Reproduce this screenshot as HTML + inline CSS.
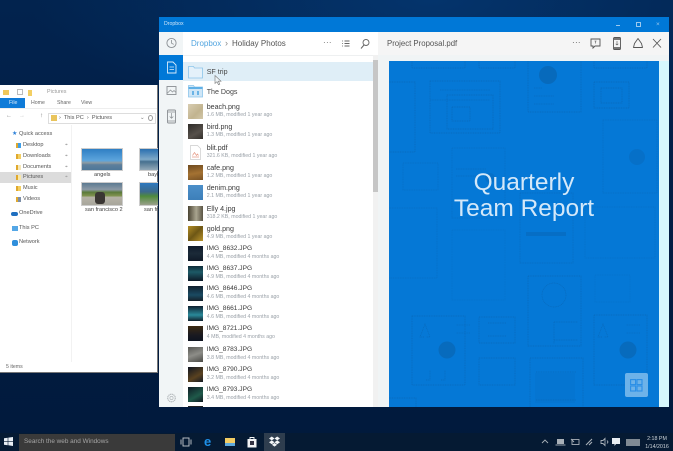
<!DOCTYPE html>
<html><head><meta charset="utf-8"><style>
*{box-sizing:border-box}
html,body{margin:0;padding:0}
body{width:673px;height:451px;overflow:hidden;position:relative;font-family:"Liberation Sans",sans-serif;background:#02183a}
#w{position:absolute;left:0;top:0;width:673px;height:451px;overflow:hidden;filter:blur(.35px)}
.a{position:absolute}
.t{position:absolute;white-space:nowrap;line-height:1}
#bg{left:0;top:0;width:673px;height:451px;background:radial-gradient(ellipse 400px 130px at 430px 0px,#04346c 0%,rgba(4,45,96,0) 100%),linear-gradient(180deg,#02234e,#021c42 60%,#011a3c)}
.row{position:absolute;left:183px;width:190px;height:20px}
.th{position:absolute;left:5px;top:2px;width:15px;height:15px}
.n{position:absolute;left:23.7px;top:2px;font-size:7.1px;color:#3a3a3a;white-space:nowrap;line-height:1}
.i{font-size:6.6px;top:2.2px}
.s{position:absolute;left:23.7px;top:11.2px;font-size:5.25px;color:#9aa1a8;white-space:nowrap;line-height:1}
.nav{position:absolute;font-size:5.6px;color:#555;white-space:nowrap;line-height:1}
.fi{position:absolute;width:5px;height:5px;background:#f3cf63;border-left:2px solid #e0a92e}
.pin{position:absolute;left:65px;font-size:5px;color:#aaa;line-height:1}
</style></head><body><div id="w">
<div class="a" id="bg"></div>

<!-- Explorer -->
<div class="a" style="left:0;top:85px;width:158px;height:288px;background:#fff;border-right:1px solid #777;border-bottom:1px solid #777"></div>
<div class="a" style="left:3px;top:90px;width:6px;height:5px;background:#f0c75a"></div>
<div class="a" style="left:17px;top:89px;width:6px;height:6px;border:1px solid #bbb;background:#fff"></div>
<div class="a" style="left:28px;top:89.5px;width:4px;height:6px;background:#f3cf63"></div>
<div class="t" style="left:47px;top:89.5px;font-size:5.4px;color:#999">Pictures</div>
<div class="a" style="left:0;top:98px;width:25px;height:10px;background:#0f7bd8"></div>
<div class="t" style="left:9px;top:100.5px;font-size:5.2px;color:#dcecf9">File</div>
<div class="t" style="left:31px;top:101px;font-size:5.2px;color:#666">Home</div>
<div class="t" style="left:57px;top:101px;font-size:5.2px;color:#666">Share</div>
<div class="t" style="left:81px;top:101px;font-size:5.2px;color:#666">View</div>
<div class="a" style="left:0;top:108px;width:157px;height:1px;background:#eee"></div>
<div class="t" style="left:6px;top:113px;font-size:6px;color:#888">←</div>
<div class="t" style="left:19px;top:113px;font-size:6px;color:#ccc">→</div>
<div class="t" style="left:40px;top:113px;font-size:6.5px;color:#777">↑</div>
<div class="a" style="left:48px;top:113px;width:108px;height:11px;border:1px solid #ddd"></div>
<div class="a" style="left:51px;top:115px;width:6px;height:6px;background:#e9c45c"></div>
<div class="t" style="left:59px;top:116px;font-size:5.6px;color:#555">›&nbsp; This PC &nbsp;›&nbsp; Pictures</div>
<div class="t" style="left:140px;top:115.5px;font-size:5.6px;color:#777">⌄</div>
<div class="a" style="left:148px;top:115px;width:5px;height:6px;border:1px solid #999;border-radius:50%"></div>

<div class="a" style="left:71px;top:125px;width:1px;height:237px;background:#f2f2f2"></div>
<div class="a" style="left:0;top:172px;width:71px;height:10.5px;background:#dcdcdc"></div>
<div class="t" style="left:12px;top:131px;font-size:6px;color:#2a7fd8">★</div>
<div class="nav" style="left:19px;top:131.5px">Quick access</div>
<div class="fi" style="left:16px;top:142.5px;background:#3f9fe8"></div><div class="nav" style="left:23px;top:142.5px">Desktop</div><div class="pin" style="top:142.5px">⌖</div>
<div class="fi" style="left:16px;top:153.5px"></div><div class="nav" style="left:23px;top:153.5px">Downloads</div><div class="pin" style="top:153.5px">⌖</div>
<div class="fi" style="left:16px;top:164.5px;background:#f5e7b8"></div><div class="nav" style="left:23px;top:164.5px">Documents</div><div class="pin" style="top:164.5px">⌖</div>
<div class="fi" style="left:16px;top:175px;background:#f7e6a8"></div><div class="nav" style="left:23px;top:175px">Pictures</div><div class="pin" style="top:175px">⌖</div>
<div class="fi" style="left:16px;top:185.5px"></div><div class="nav" style="left:23px;top:185.5px">Music</div>
<div class="fi" style="left:16px;top:196.5px;background:#7d8fa8"></div><div class="nav" style="left:23px;top:196.5px">Videos</div>
<div class="a" style="left:11px;top:212px;width:7px;height:4px;background:#1f6fc0;border-radius:2px"></div><div class="nav" style="left:19px;top:211px">OneDrive</div>
<div class="a" style="left:12px;top:226px;width:6px;height:5px;background:#54a7e6"></div><div class="nav" style="left:19px;top:225.5px">This PC</div>
<div class="a" style="left:12px;top:240px;width:6px;height:6px;background:#2f8fdc;border-radius:2px"></div><div class="nav" style="left:19px;top:240px">Network</div>
<div class="t" style="left:6px;top:365px;font-size:5.2px;color:#666">5 items</div>

<div class="a" style="left:81px;top:148px;width:42px;height:23px;background:linear-gradient(180deg,#2f7fc4 0%,#5da5dc 55%,#8e9aa0 66%,#5d7f9c 75%,#4d7799 100%);border:1px solid #ccc"></div>
<div class="t" style="left:94px;top:173px;font-size:5.6px;color:#444">angels</div>
<div class="a" style="left:139px;top:148px;width:19px;height:23px;background:linear-gradient(180deg,#2a6fb0,#7fa9c8 50%,#46708f 60%,#93a9b8);border:1px solid #ccc;border-right:0"></div>
<div class="t" style="left:148px;top:173px;font-size:5.6px;color:#444">bayl</div>
<div class="a" style="left:81px;top:182px;width:42px;height:24px;background:linear-gradient(180deg,#5c7a92 0%,#8c99a5 30%,#5b7a3a 42%,#80924f 58%,#b5b2a6 65%,#a8a69c 100%);border:1px solid #ccc"></div>
<div class="a" style="left:95px;top:192px;width:10px;height:12px;background:#3a3633;border-radius:3px"></div>
<div class="t" style="left:85px;top:208px;font-size:5.6px;color:#444">san francisco 2</div>
<div class="a" style="left:139px;top:182px;width:19px;height:24px;background:linear-gradient(180deg,#2d78bf,#3d6a8a 40%,#4e8a3c 60%,#9aa08a);border:1px solid #ccc;border-right:0"></div>
<div class="t" style="left:144px;top:208px;font-size:5.6px;color:#444">san fr</div>

<!-- Dropbox window -->
<div class="a" style="left:159px;top:17px;width:510px;height:390px;background:#fff"></div>
<div class="a" style="left:159px;top:17px;width:510px;height:15px;background:#0078d7"></div>
<div class="t" style="left:164px;top:22px;font-size:5.2px;color:#cfe6f8">Dropbox</div>
<div class="a" style="left:616px;top:24.5px;width:4px;height:1px;background:#9cc9ee"></div>
<div class="a" style="left:636px;top:22px;width:5px;height:5px;border:1px solid #9cc9ee"></div>
<div class="t" style="left:656px;top:21.5px;font-size:6.5px;color:#9cc9ee">×</div>

<div class="a" style="left:159px;top:32px;width:24px;height:375px;background:#f1f5f6"></div>
<div class="a" style="left:159px;top:55px;width:24px;height:25px;background:#0078d7"></div>
<div class="a" style="left:183px;top:55px;width:190px;height:1px;background:#eef0f1"></div>
<div class="a" style="left:378px;top:32px;width:291px;height:375px;background:#f0f4f5"></div>
<div class="a" style="left:378px;top:32px;width:291px;height:23px;background:#f5f5f5"></div>

<svg class="a" style="left:159px;top:32px" width="24" height="375" fill="none">
<circle cx="12.5" cy="11" r="4.6" stroke="#8a8f93" stroke-width=".9"/><path d="M12.5 8v3.2l2.2 1.2" stroke="#8a8f93" stroke-width=".8"/>
<path d="M8.5 30h5.500l3 3v8h-8.500z" stroke="#d8ecfb" stroke-width=".9"/><path d="M10.500 35h4.500M10.500 37.500h4.500" stroke="#d8ecfb" stroke-width=".7"/>
<rect x="8" y="54.500" width="9" height="8" stroke="#8a8f93" stroke-width=".9"/><path d="M8.500 61l3-3 2 2 1.500-1.500 2 2" stroke="#8a8f93" stroke-width=".7"/>
<rect x="8.500" y="78" width="8" height="13" rx="1" stroke="#8a8f93" stroke-width=".9"/><path d="M12.500 81v5M10.700 84.500l1.800 1.800 1.800-1.800M8.500 80h8M8.500 89h8" stroke="#8a8f93" stroke-width=".7"/>
<circle cx="12.500" cy="366" r="3.800" stroke="#b4b9bc" stroke-width="1.100" stroke-dasharray="1.300 .5"/><circle cx="12.500" cy="366" r="1.600" stroke="#b4b9bc" stroke-width=".7"/>
</svg>

<div class="t" style="left:191px;top:40px;font-size:8px;color:#52a5e0">Dropbox</div>
<div class="t" style="left:225px;top:39px;font-size:9px;color:#888">›</div>
<div class="t" style="left:232px;top:40px;font-size:8px;color:#555">Holiday Photos</div>
<div class="t" style="left:323px;top:39px;font-size:8px;color:#666;letter-spacing:.3px">···</div>
<svg class="a" style="left:340px;top:38px" width="32" height="13" fill="none" stroke="#666">
<path d="M4.500 3h5M4.500 5.500h5M4.500 8h5" stroke-width="1.100"/><path d="M2 3h1M2 5.500h1M2 8h1" stroke-width=".8"/>
<circle cx="26" cy="4.500" r="3" stroke-width=".9"/><path d="M24 7l-3 3.500" stroke-width="1"/>
</svg>

<div class="t" style="left:387px;top:40px;font-size:7.800px;color:#555">Project Proposal.pdf</div>
<div class="t" style="left:572px;top:39px;font-size:8px;color:#555;letter-spacing:.3px">···</div>
<svg class="a" style="left:588px;top:35px" width="78" height="17" fill="none" stroke="#555">
<path d="M3 4h9v7H7l-2 2v-2H3z" stroke-width=".9"/><path d="M7.500 6v2.500M6.500 6h2" stroke-width=".6"/>
<rect x="25.500" y="2.500" width="7" height="12" rx="1" stroke-width=".9"/><rect x="26" y="3" width="6" height="2" fill="#777" stroke="none"/><rect x="26" y="12" width="6" height="2" fill="#777" stroke="none"/><path d="M29 6v4M27.700 8.800L29 10l1.300-1.200" stroke-width=".6"/>
<path d="M50 3.500l3.500 5 1 4h-9l1-4z" stroke-width=".9" stroke-linejoin="round"/>
<path d="M65 4l8 8.500M73 4l-8 8.500" stroke-width=".9"/>
</svg>

<!-- list -->
<div class="a" style="left:183px;top:62px;width:190px;height:19px;background:#dfeef7"></div>
<svg class="a" style="left:188px;top:64px" width="15" height="34" fill="none">
<path d="M.5 2.500h5l1 1.500h8v10H.5z" fill="#e4f1fa" stroke="#8cc5ea" stroke-width=".8"/>
<path d="M.5 21.500h5l1 1.500h8v10H.5z" fill="#cfe6f7" stroke="#8cc5ea" stroke-width=".8"/>
<path d="M.5 24h14" stroke="#5fb0e6" stroke-width="2"/>
<path d="M5 27v4M10 27v4" stroke="#4aa3e0" stroke-width="1.500"/>
</svg>
<div class="t" style="left:206.700px;top:68.500px;font-size:7.100px;color:#444">SF trip</div>
<svg class="a" style="left:214px;top:75px" width="8" height="11"><path d="M1 .5v8l2-1.800 1.500 3 1.300-.6-1.400-2.900h2.600z" fill="#eef4f7" stroke="#777" stroke-width=".6"/></svg>
<div class="t" style="left:206.700px;top:88.500px;font-size:7.100px;color:#444">The Dogs</div>

<div class="row" style="top:102px"><div class="th" style="background:linear-gradient(135deg,#d8cdb2,#c2b48f 60%,#d2c7aa)"></div><div class="n">beach.png</div><div class="s">1.6 MB, modified 1 year ago</div></div>
<div class="row" style="top:122px"><div class="th" style="background:linear-gradient(150deg,#2d2b28,#56504a 60%,#33302c)"></div><div class="n">bird.png</div><div class="s">1.3 MB, modified 1 year ago</div></div>
<div class="row" style="top:142.500px"><svg class="th" viewBox="0 0 15 15" fill="none"><path d="M2.500.5h7l3 3v11h-10z" fill="#fff" stroke="#ccc" stroke-width=".7"/><path d="M4.500 10.500l2-3 2 3 1-1.500 1 1.500M4 12h7" stroke="#e59a86" stroke-width=".7"/></svg><div class="n">blit.pdf</div><div class="s">321.6 KB, modified 1 year ago</div></div>
<div class="row" style="top:163px"><div class="th" style="background:linear-gradient(170deg,#6e4a1f,#a47232 55%,#7a5325)"></div><div class="n">cafe.png</div><div class="s">1.2 MB, modified 1 year ago</div></div>
<div class="row" style="top:183px"><div class="th" style="background:linear-gradient(180deg,#4b8fc9,#3d7fb9)"></div><div class="n">denim.png</div><div class="s">2.1 MB, modified 1 year ago</div></div>
<div class="row" style="top:203.500px"><div class="th" style="background:linear-gradient(90deg,#4a4433,#a9a48f 55%,#5a5444)"></div><div class="n">Elly 4.jpg</div><div class="s">318.2 KB, modified 1 year ago</div></div>
<div class="row" style="top:224px"><div class="th" style="background:linear-gradient(135deg,#b38e26,#6e5715 50%,#b8932c)"></div><div class="n">gold.png</div><div class="s">4.9 MB, modified 1 year ago</div></div>
<div class="row" style="top:243.500px"><div class="th" style="background:linear-gradient(180deg,#0f1a2c,#1b2a38 50%,#101a28)"></div><div class="n i">IMG_8632.JPG</div><div class="s">4.4 MB, modified 4 months ago</div></div>
<div class="row" style="top:264px"><div class="th" style="background:linear-gradient(180deg,#0e2b38,#1d5a66 40%,#0e1a28)"></div><div class="n i">IMG_8637.JPG</div><div class="s">4.9 MB, modified 4 months ago</div></div>
<div class="row" style="top:284px"><div class="th" style="background:linear-gradient(180deg,#10202e,#1a4a62 60%,#16202a)"></div><div class="n i">IMG_8646.JPG</div><div class="s">4.6 MB, modified 4 months ago</div></div>
<div class="row" style="top:304px"><div class="th" style="background:linear-gradient(180deg,#0e2030,#2a8a9a 60%,#12222e)"></div><div class="n i">IMG_8661.JPG</div><div class="s">4.6 MB, modified 4 months ago</div></div>
<div class="row" style="top:324px"><div class="th" style="background:linear-gradient(180deg,#3b2a12,#1a1a20 60%,#0e1420)"></div><div class="n i">IMG_8721.JPG</div><div class="s">4 MB, modified 4 months ago</div></div>
<div class="row" style="top:344.500px"><div class="th" style="background:linear-gradient(160deg,#595955,#8d8d88 50%,#4a4a46)"></div><div class="n i">IMG_8783.JPG</div><div class="s">3.8 MB, modified 4 months ago</div></div>
<div class="row" style="top:364.500px"><div class="th" style="background:linear-gradient(150deg,#0e1420,#5a4220 60%,#141a24)"></div><div class="n i">IMG_8790.JPG</div><div class="s">3.2 MB, modified 4 months ago</div></div>
<div class="row" style="top:385px"><div class="th" style="background:linear-gradient(150deg,#0e1a24,#1f5a4a 60%,#101822)"></div><div class="n i">IMG_8793.JPG</div><div class="s">3.4 MB, modified 4 months ago</div></div>
<div class="a" style="left:188px;top:406px;width:15px;height:1px;background:#222"></div>

<!-- scrollbar -->
<div class="a" style="left:373px;top:55px;width:5px;height:352px;background:#f1f1f1"></div>
<div class="a" style="left:373px;top:60px;width:5px;height:132px;background:#c6c6c6"></div>

<!-- preview -->
<div class="a" style="left:659px;top:61px;width:10px;height:346px;background:#d6f7fd"></div>
<div class="a" style="left:389px;top:61px;width:270px;height:346px;background:#0578d6;overflow:hidden">
<svg width="270" height="346" viewBox="389 61 270 346" fill="none" stroke="#0a5fa8" stroke-width=".7" stroke-dasharray="1 .7" style="position:absolute;left:0;top:0;opacity:.62">
<rect x="412" y="40" width="53" height="28"/><rect x="479" y="40" width="36" height="28"/><rect x="528" y="40" width="53" height="72"/><rect x="594" y="40" width="53" height="28"/>
<rect x="594" y="82" width="35" height="26"/><rect x="601" y="88" width="21" height="15"/>
<rect x="430" y="81" width="70" height="52"/><rect x="447" y="95" width="46" height="34"/><rect x="452" y="107" width="18" height="14"/>
<rect x="375" y="82" width="40" height="70"/>
<rect x="452" y="148" width="53" height="70" opacity=".65"/><rect x="403" y="163" width="35" height="27" opacity=".65"/><rect x="603" y="120" width="54" height="73" opacity=".65"/>
<rect x="380" y="208" width="57" height="70" opacity=".65"/><rect x="520" y="193" width="53" height="70" opacity=".8"/><rect x="585" y="207" width="70" height="51" opacity=".5"/>
<rect x="452" y="230" width="53" height="70" opacity=".45"/>
<rect x="528" y="276" width="53" height="70"/><rect x="412" y="316" width="53" height="69"/><rect x="479" y="317" width="36" height="26"/><rect x="479" y="358" width="36" height="27"/><rect x="594" y="315" width="53" height="70"/><rect x="530" y="358" width="53" height="60"/><rect x="375" y="398" width="41" height="20"/><rect x="595" y="275" width="35" height="27" opacity=".4"/>
<circle cx="554" cy="295" r="12" opacity=".9"/><path d="M554 322v22M554 322h24M554 340h24" opacity=".9"/>
<path d="M456 169h30M456 176h30M430 100h60M452 100h36M440 90h50M534 88h8M534 96h20M534 104h20" opacity=".8"/>
<path d="M424 337h-4l5-13 5 13h-4M426 380h4v-10M441 380h4v-10M488 323h18M488 336h18M536 372h40M536 400h40M602 337h-4l5-13 5 13h-4" opacity=".9"/>
<path d="M470 325h-14M470 333h-14M640 325h-14M640 333h-14" opacity=".7"/>
<g stroke="none" fill="#0a5fa8"><circle cx="548" cy="75" r="9" opacity=".9"/><circle cx="447" cy="350" r="8.500" opacity=".85"/><circle cx="628" cy="350" r="8.500" opacity=".85"/><circle cx="637" cy="157" r="8" opacity=".5"/><circle cx="490" cy="178" r="5" opacity=".5"/><rect x="535" y="373" width="40" height="30" opacity=".2"/><rect x="526" y="232" width="40" height="4" opacity=".6"/></g>
</svg>
<div class="t" style="left:0;width:270px;text-align:center;top:109.500px;font-size:24.500px;color:#d4e8f9">Quarterly</div>
<div class="t" style="left:0;width:270px;text-align:center;top:135.500px;font-size:24.500px;color:#d4e8f9">Team Report</div>
<div class="a" style="left:236px;top:312px;width:23px;height:24px;background:#6db2e9;border-radius:2px"></div>
<svg class="a" style="left:241px;top:318px" width="13" height="13" fill="none" stroke="#2a8ee6" stroke-width="1.100"><rect x=".6" y=".6" width="5" height="5"/><rect x="7" y=".6" width="5" height="5"/><rect x=".6" y="7" width="5" height="5"/><rect x="7" y="7" width="5" height="5"/></svg>
</div>

<!-- Taskbar -->
<div class="a" style="left:0;top:433px;width:673px;height:18px;background:#051a33"></div>
<svg class="a" style="left:4px;top:437px" width="9" height="9" fill="#e8eef4"><path d="M0 1.300L3.700.7v3.400H0zM4.300.6L9 0v4.100H4.300zM0 4.700h3.700v3.600L0 7.700zM4.300 4.700H9V9l-4.700-.7z"/></svg>
<div class="a" style="left:19px;top:434px;width:156px;height:17px;background:#3a3a3a"></div>
<div class="t" style="left:24px;top:439px;font-size:6.400px;color:#a5a5a5">Search the web and Windows</div>
<svg class="a" style="left:180px;top:437px" width="12" height="10" fill="none" stroke="#c8ccd0" stroke-width=".9"><rect x="3" y="1" width="6" height="8"/><path d="M1 2.500v5M11 2.500v5"/></svg>
<div class="t" style="left:204px;top:434.500px;font-size:13px;color:#1e90e8;font-weight:bold">e</div>
<div class="a" style="left:225px;top:438px;width:10px;height:8px;background:#f2cc63;border-bottom:3px solid #5ea9dd"></div>
<svg class="a" style="left:247px;top:436px" width="10" height="12" fill="#f2f4f6"><path d="M.5 3h9v8.500h-9z"/><path d="M3 3V1.500h4V3" fill="none" stroke="#f2f4f6" stroke-width=".9"/><rect x="3" y="5" width="4" height="4" fill="#334"/></svg>
<div class="a" style="left:264px;top:433px;width:21px;height:18px;background:#2e3d4e"></div>
<svg class="a" style="left:269px;top:436px" width="11" height="11" fill="#f4f6f8"><path d="M2.800 .5L5.500 2.500 2.800 4.400 0 2.500zM8.200 .5L11 2.500 8.200 4.400 5.500 2.500zM2.800 4.400L5.500 6.300 2.800 8.200 0 6.300zM8.200 4.400L11 6.300 8.200 8.200 5.500 6.300zM2.900 8.800L5.500 7 8.100 8.800 5.500 10.600z"/></svg>

<svg class="a" style="left:540px;top:436px" width="85" height="12" fill="none" stroke="#a8b0b8" stroke-width=".9">
<path d="M2 7l3-3 3 3"/>
<rect x="17" y="3" width="7" height="5" fill="#a8b0b8" stroke="none"/><path d="M15.500 9h10"/>
<rect x="32" y="3.500" width="7" height="5"/><path d="M31 3l3 3"/>
<path d="M46 9l6-6M49 9l3-3" stroke-width="1.100"/>
<path d="M61 4.500h2l2-2v7l-2-2h-2zM67 4.500l1 1.500-1 1.500"/>
<path d="M72 2h8v6h-4l-1.500 2V8H72z" fill="#e8edf2" stroke="none"/>
</svg>
<div class="a" style="left:626px;top:438.500px;width:14px;height:7px;background:#7f8a94"></div>
<div class="t" style="left:644px;top:437px;width:26px;text-align:center;font-size:5.300px;color:#ccd3d9">2:18 PM</div>
<div class="t" style="left:644px;top:444.500px;width:26px;text-align:center;font-size:5.300px;color:#ccd3d9">1/14/2016</div>
</div></body></html>
